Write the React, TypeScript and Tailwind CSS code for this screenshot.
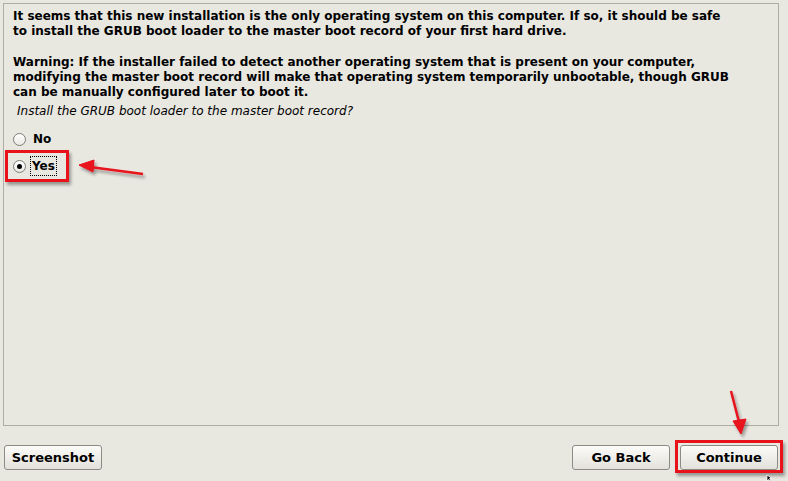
const btn =
  "h-[25px] rounded-[3px] border border-[#8d8b83] bg-gradient-to-b from-[#fbfbf9] to-[#e3e1da] text-[13px] font-bold text-black";

const Radio = ({ checked }: { checked?: boolean }) => (
  <span className="flex h-[13px] w-[13px] items-center justify-center rounded-full border border-[#7f7d76] bg-gradient-to-b from-[#ffffff] to-[#e9e8e3]">
    {checked && <span className="h-[5px] w-[5px] rounded-full bg-black" />}
  </span>
);

const App = () => {
  return (
    <div
      className="relative flex h-[481px] w-[788px] flex-col overflow-hidden bg-[#e8e7e0] text-black"
      style={{ fontFamily: '"DejaVu Sans", sans-serif' }}
    >
      {/* main panel */}
      <div className="ml-[3px] mr-[9px] mt-[3px] h-[423px] border border-[#aeaca4] pl-[9px] pt-[5px]">
        <p className="text-[12px] leading-[15px] font-bold">
          It seems that this new installation is the only operating system on this computer. If so, it should be safe
          <br />
          to install the GRUB boot loader to the master boot record of your first hard drive.
        </p>
        <p className="mt-[16px] text-[12px] leading-[15px] font-bold">
          Warning: If the installer failed to detect another operating system that is present on your computer,
          <br />
          modifying the master boot record will make that operating system temporarily unbootable, though GRUB
          <br />
          can be manually configured later to boot it.
        </p>
        <p className="ml-[4px] mt-[4px] text-[12px] leading-[15px] italic">
          Install the GRUB boot loader to the master boot record?
        </p>

        <div className="mt-[10px] flex flex-col">
          <div className="flex h-[20px] items-center gap-[7px] pl-0">
            <Radio />
            <span className="text-[12px] font-bold">No</span>
          </div>
          <div className="-ml-[8px] mt-[1px] flex h-[32px] w-[64px] items-center gap-[4px] border-[3px] border-[#e8121b] pl-[5px] shadow-[2px_3px_3px_rgba(0,0,0,0.35)]">
            <Radio checked />
            <span className="border border-dotted border-black px-[1px] py-[2px] text-[12px] leading-[14px] font-bold">
              Yes
            </span>
          </div>
        </div>
      </div>

      {/* bottom buttons */}
      <div className="flex items-start pl-[4px] pr-[5px] pt-[19px]">
        <button className={`${btn} w-[98px]`}>Screenshot</button>
        <div className="flex-1" />
        <button className={`${btn} mr-[5px] w-[98px]`}>Go Back</button>
        <div className="-mt-[5px] border-[3px] border-[#e8121b] px-[2px] pb-0 pt-[2px] shadow-[2px_3px_3px_rgba(0,0,0,0.35)]">
          <button className={`${btn} w-[98px]`}>Continue</button>
        </div>
      </div>

      {/* annotation arrows + cursor */}
      <svg className="pointer-events-none absolute left-0 top-0" width="788" height="481">
        <defs>
          <filter id="sh" x="-20%" y="-20%" width="140%" height="140%">
            <feDropShadow dx="2" dy="3" stdDeviation="1.5" floodColor="#000" floodOpacity="0.35" />
          </filter>
        </defs>
        <g filter="url(#sh)" fill="#e8121b" stroke="#e8121b">
          <line x1="143" y1="174" x2="90" y2="167" strokeWidth="2.5" />
          <polygon points="79,165 94,160 93,172" strokeWidth="1" />
          <line x1="731" y1="391" x2="739" y2="422" strokeWidth="2.5" />
          <polygon points="741,434 733,421 746,419" strokeWidth="1" />
        </g>
        <polygon points="767,475 767,481 768.5,479.5 770,481 771,481 769.5,478.5 772,478.5" fill="#000" stroke="#fff" strokeWidth="0.8" />
      </svg>
    </div>
  );
};

export default App;
